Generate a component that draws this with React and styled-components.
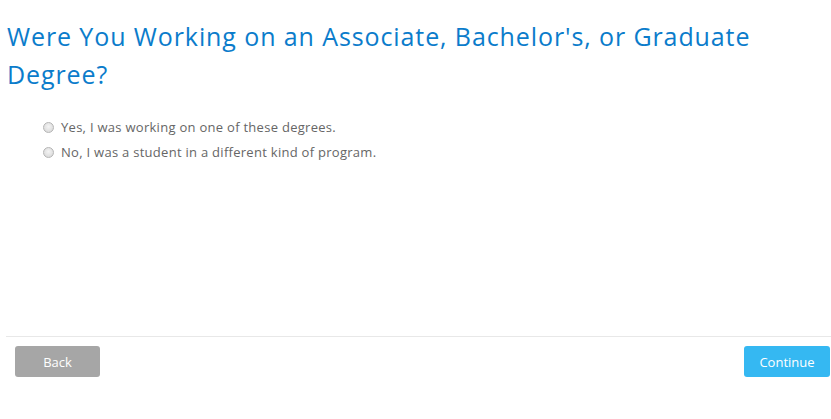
import React from "react";
import styled, { createGlobalStyle } from "styled-components";

const Global = createGlobalStyle`
  html, body { margin: 0; padding: 0; background: #fff; }
  body { font-family: "Open Sans", "Liberation Sans", sans-serif; }
`;

const Page = styled.div`
  width: 831px;
  height: 419px;
  display: flex;
  flex-direction: column;
  box-sizing: border-box;
  padding: 0 0 0 6px;
`;

const Title = styled.h1`
  margin: 17px 0 0 1px;
  font-family: "Open Sans", sans-serif;
  font-weight: 400;
  font-size: 25px;
  line-height: 38px;
  color: #0b7ccb;
  letter-spacing: 0.9px;
`;

const Options = styled.div`
  margin: 24px 0 0 37px;
  display: flex;
  flex-direction: column;
  gap: 5px;
`;

const Option = styled.label`
  display: flex;
  align-items: center;
  gap: 7px;
  height: 20px;
  font-family: "Open Sans", sans-serif;
  font-size: 13px;
  letter-spacing: 0.28px;
  color: #666;
`;

const Radio = styled.span`
  width: 9px;
  height: 9px;
  border-radius: 50%;
  border: 1px solid #b5b5b5;
  background: radial-gradient(circle at 50% 40%, #f4f4f4, #d4d4d4);
  box-sizing: content-box;
  flex: none;
`;

const Spacer = styled.div`
  flex: 1;
`;

const Footer = styled.div`
  border-top: 1px solid #e8e8e8;
  margin-bottom: 42px;
  padding: 9px 1px 0 9px;
  display: flex;
  justify-content: space-between;
`;

const Button = styled.button`
  width: ${(p) => p.w}px;
  height: 31px;
  border: none;
  border-radius: 3px;
  background: ${(p) => p.bg};
  color: #fff;
  font-family: "Open Sans", sans-serif;
  font-size: 13px;
  padding: 0;
  cursor: pointer;
`;

export default function App() {
  return (
    <>
      <Global />
      <Page>
        <Title>
          Were You Working on an Associate, Bachelor's, or Graduate Degree?
        </Title>
        <Options>
          <Option>
            <Radio />
            Yes, I was working on one of these degrees.
          </Option>
          <Option>
            <Radio />
            No, I was a student in a different kind of program.
          </Option>
        </Options>
        <Spacer />
        <Footer>
          <Button w={85} bg="#a6a6a6">Back</Button>
          <Button w={86} bg="#35b8f2">Continue</Button>
        </Footer>
      </Page>
    </>
  );
}
